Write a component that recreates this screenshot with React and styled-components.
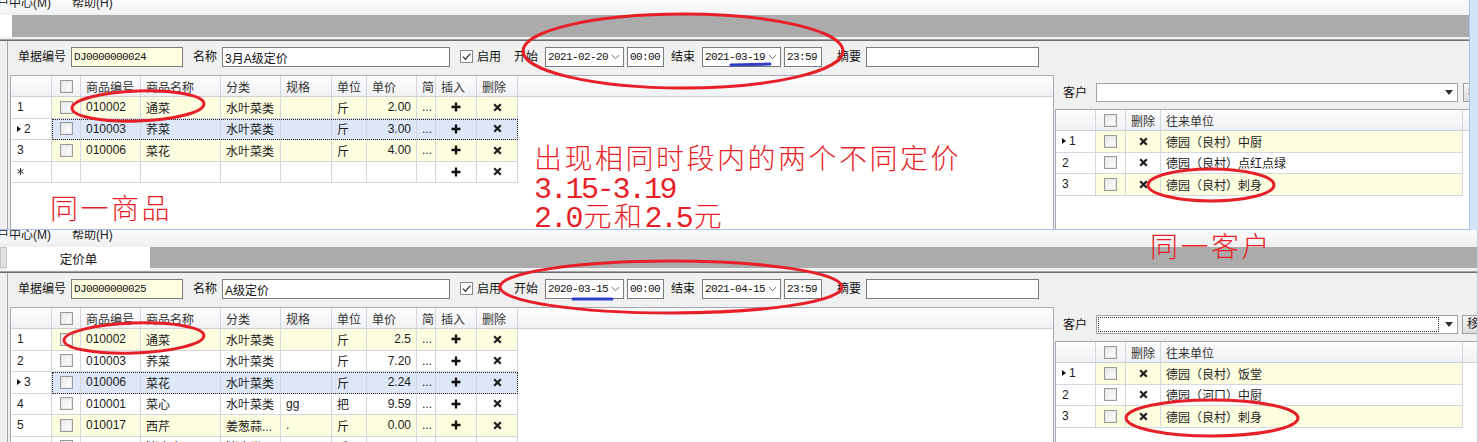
import React from 'react';
import styled, { createGlobalStyle } from 'styled-components';

const UI = `"Liberation Sans", "Noto Sans CJK SC", sans-serif`;
const MONO = `"Liberation Mono", "Noto Sans CJK SC", monospace`;
const YELLOW = '#fdfde0';
const SELECTED = '#dde7f7';
const RED = '#e61f28';

const GlobalStyle = createGlobalStyle`
  html, body { margin: 0; padding: 0; }
  body {
    width: 1478px;
    height: 442px;
    overflow: hidden;
    background: #dbe7f8;
    font-family: ${UI};
    font-size: 12px;
    color: #1b1b1b;
  }
`;

const Page = styled.div`
  position: relative;
  width: 1478px;
  height: 442px;
  overflow: hidden;
  display: flex;
  flex-direction: column;
  background: linear-gradient(90deg, #f4f7fc, #d3e3f8);
`;

const Window = styled.div`
  flex: none;
  width: ${p => p.$width}px;
  height: ${p => p.$height}px;
  box-sizing: border-box;
  display: flex;
  flex-direction: column;
  overflow: hidden;
  background: #f0f0f0;
  border-right: 1px solid ${p => p.$edge};
  border-bottom: ${p => (p.$bottom ? `1px solid ${p.$edge}` : 'none')};
`;

/* menu bar, cut at the top in both captures */
const Menubar = styled.div`
  flex: none;
  height: ${p => p.$h}px;
  box-sizing: border-box;
  padding-bottom: ${p => p.$pb}px;
  display: flex;
  align-items: flex-end;
  background: linear-gradient(#fbfbfb, #f2f3f5);
  overflow: hidden;
`;

const MenuItem = styled.span`
  flex: none;
  margin-left: ${p => p.$ml}px;
  font-size: 12px;
  line-height: 12px;
  color: #202020;
  white-space: nowrap;
`;

const TabStrip = styled.div`
  flex: none;
  height: 24px;
  margin-top: ${p => p.$mt}px;
  display: flex;
  align-items: flex-start;
  background: #f0f0f0;
`;

const TabStub = styled.div`
  flex: none;
  width: ${p => p.$w}px;
  height: ${p => p.$h}px;
  box-sizing: border-box;
  background: ${p => p.$bg};
  border: ${p => (p.$framed ? '1px solid #c4c4c4' : 'none')};
`;

const Tab = styled.div`
  flex: none;
  width: 143px;
  height: 23px;
  background: #fff;
  display: flex;
  align-items: center;
  justify-content: center;
  font-size: 12.5px;
  color: #111;
`;

const TabFill = styled.div`
  flex: 1;
  height: ${p => p.$h}px;
  background: #ababab;
`;

const Rule = styled.div`
  flex: none;
  height: 2px;
  box-sizing: border-box;
  border-top: 1px solid #a4a4a4;
  background: #6c6c6c;
`;

const Body = styled.div`
  flex: 1;
  min-height: 0;
  margin-left: 7px;
  border-left: 1px solid #a7a7a7;
  display: flex;
  flex-direction: column;
`;

const FormRow = styled.div`
  flex: none;
  height: 34px;
  box-sizing: border-box;
  padding: 6px 0 0 10px;
  display: flex;
  align-items: flex-start;
`;

const Label = styled.span`
  flex: none;
  margin-left: ${p => p.$ml || 0}px;
  line-height: 20px;
  font-size: 12px;
  color: #111;
  white-space: nowrap;
`;

const Input = styled.div`
  flex: none;
  margin-left: ${p => p.$ml || 0}px;
  width: ${p => p.$w}px;
  height: 20px;
  box-sizing: border-box;
  border: 1px solid #7c7c7c;
  background: ${p => (p.$yellow ? '#ffffe1' : '#fff')};
  padding: 0 3px 0 2px;
  display: flex;
  align-items: center;
  justify-content: space-between;
  font-family: ${p => (p.$mono ? MONO : UI)};
  font-size: ${p => (p.$mono ? '11px' : '12px')};
  letter-spacing: ${p => (p.$mono ? '-0.6px' : '0')};
  color: #111;
  white-space: nowrap;
  overflow: hidden;
`;

const FormCheck = styled.span`
  flex: none;
  margin: 3px 0 0 ${p => p.$ml}px;
  width: 13px;
  height: 13px;
  box-sizing: border-box;
  border: 1px solid #8a8a8a;
  background: #fff;
  display: flex;
  align-items: center;
  justify-content: center;
`;

const Content = styled.div`
  flex: 1;
  min-height: 0;
  display: flex;
`;

const GridFrame = styled.div`
  flex: ${p => (p.$w ? 'none' : '1')};
  width: ${p => (p.$w ? `${p.$w}px` : 'auto')};
  margin-left: ${p => p.$ml || 0}px;
  box-sizing: border-box;
  background: #fff;
  border-top: 1px solid #a6a7b0;
  border-left: 1px solid #a6a7b0;
  border-right: ${p => (p.$rb ? '1px solid #a6a7b0' : 'none')};
  overflow: hidden;
`;

const HeadRow = styled.div`
  display: flex;
  height: 21px;
  box-sizing: border-box;
  border-bottom: 1px solid #cdcfd8;
  background: linear-gradient(#fdfdfe, #f0f1f4);
  color: #333;
`;

const HeadCell = styled.div`
  flex: none;
  width: ${p => p.$w}px;
  box-sizing: border-box;
  border-right: 1px solid #d3d5dd;
  padding-left: ${p => (p.$center ? 0 : 5)}px;
  display: flex;
  align-items: center;
  justify-content: ${p => (p.$center ? 'center' : 'flex-start')};
  white-space: nowrap;
  overflow: hidden;
`;

const Row = styled.div`
  display: flex;
  height: 21.5px;
`;

const RowHead = styled.div`
  flex: none;
  width: ${p => p.$w}px;
  box-sizing: border-box;
  border-right: 1px solid #d5d6de;
  border-bottom: 1px solid #d5d6de;
  background: #fff;
  padding-left: 6px;
  display: flex;
  align-items: center;
  gap: 3px;
  color: #222;
`;

const RowBody = styled.div`
  display: flex;
  background: ${p => (p.$tone === 'odd' ? YELLOW : p.$tone === 'sel' ? SELECTED : '#fff')};
  outline: ${p => (p.$tone === 'sel' ? '1px dotted #2a2a2a' : 'none')};
  outline-offset: -1px;
`;

const Cell = styled.div`
  flex: none;
  width: ${p => p.$w}px;
  box-sizing: border-box;
  border-right: 1px solid #d5d6de;
  border-bottom: 1px solid #d5d6de;
  padding: 0 5px;
  display: flex;
  align-items: center;
  justify-content: ${p => (p.$align === 'center' ? 'center' : p.$align === 'right' ? 'flex-end' : 'flex-start')};
  white-space: nowrap;
  overflow: hidden;
  color: #1c1c1c;
`;

const Check = styled.span`
  flex: none;
  width: 13px;
  height: 13px;
  box-sizing: border-box;
  border: 1px solid #9b9b9b;
  box-shadow: inset 0 0 0 1px #e6e6e6;
  background: linear-gradient(135deg, #e9e9e9, #ffffff);
`;

const Arrow = styled.span`
  width: 0;
  height: 0;
  border-top: 3.5px solid transparent;
  border-bottom: 3.5px solid transparent;
  border-left: 4px solid #111;
`;

const RightPanel = styled.div`
  flex: 1;
  min-width: 0;
  display: flex;
  flex-direction: column;
  padding-left: 1px;
`;

const CustomerRow = styled.div`
  flex: none;
  height: 34px;
  box-sizing: border-box;
  padding: 8px 0 0 8px;
  display: flex;
  align-items: flex-start;
`;

const Combo = styled.div`
  flex: none;
  margin-left: 9px;
  width: 362px;
  height: 19px;
  box-sizing: border-box;
  border: 1px solid #a2a2a8;
  background: #fff;
  display: flex;
  align-items: center;
  justify-content: flex-end;
  padding-right: 4px;
  position: relative;
  &::before {
    content: '';
    display: ${p => (p.$focus ? 'block' : 'none')};
    position: absolute;
    left: 1px;
    top: 1px;
    right: 18px;
    bottom: 1px;
    border: 1px dotted #333;
  }
`;

const SideButton = styled.div`
  flex: none;
  margin-left: ${p => p.$ml}px;
  width: 24px;
  height: 19px;
  box-sizing: border-box;
  border: 1px solid #a0a0a0;
  background: linear-gradient(#f6f6f6, #dcdcdc);
  padding-left: 4px;
  line-height: 17px;
  font-size: 12px;
`;

const Note = styled.div`
  position: absolute;
  left: ${p => p.$x}px;
  top: ${p => p.$y}px;
  color: ${RED};
  font-family: "Noto Sans CJK SC", sans-serif;
  font-weight: 300;
  font-size: 28px;
  line-height: 29px;
  letter-spacing: 2.5px;
  white-space: nowrap;
  pointer-events: none;
`;

const Num = styled.span`
  font-family: "Liberation Mono", monospace;
  font-size: 30px;
  line-height: 10px;
  letter-spacing: -2.3px;
  margin-right: 2.3px;
`;

const Marks = styled.svg`
  position: absolute;
  left: 0;
  top: 0;
  pointer-events: none;
`;

const Plus = () => (
  <svg width="10" height="10" viewBox="0 0 10 10">
    <path d="M5 0.5v9M0.5 5h9" stroke="#111" strokeWidth="2.3" />
  </svg>
);

const Cross = () => (
  <svg width="9" height="9" viewBox="0 0 9 9">
    <path d="M1.2 1.2l6.6 6.6M7.8 1.2l-6.6 6.6" stroke="#1e1e1e" strokeWidth="2.2" />
  </svg>
);

const NewMark = () => (
  <svg width="7" height="7" viewBox="0 0 7 7">
    <path d="M3.5 0v7M0.5 1.8l6 3.4M6.5 1.8l-6 3.4" stroke="#333" strokeWidth="1" />
  </svg>
);

const Chevron = () => (
  <svg width="9" height="6" viewBox="0 0 9 6">
    <path d="M0.8 1l3.7 3.7L8.2 1" fill="none" stroke="#6b6b6b" strokeWidth="1" />
  </svg>
);

const DropArrow = () => (
  <svg width="8" height="5" viewBox="0 0 8 5">
    <path d="M0 0h8L4 5z" fill="#2f2f2f" />
  </svg>
);

const Tick = () => (
  <svg width="11" height="11" viewBox="0 0 11 11">
    <path d="M1.8 5.6l2.6 2.6L9.4 2.6" fill="none" stroke="#3a3a3a" strokeWidth="1.3" />
  </svg>
);

const GOODS_COLS = [
  { key: 'cb', w: 29, center: true },
  { key: 'code', w: 60, title: '商品编号' },
  { key: 'name', w: 80, title: '商品名称' },
  { key: 'cat', w: 60, title: '分类' },
  { key: 'spec', w: 51, title: '规格' },
  { key: 'unit', w: 35, title: '单位' },
  { key: 'price', w: 50, title: '单价', align: 'right' },
  { key: 'memo', w: 19, title: '简' },
  { key: 'ins', w: 41, title: '插入', align: 'center' },
  { key: 'del', w: 41, title: '删除', align: 'center' },
];

const PARTY_COLS = [
  { key: 'cb', w: 30, center: true },
  { key: 'del', w: 35, title: '删除', align: 'center' },
  { key: 'party', w: 302, title: '往来单位' },
];

const good = (n, tone, code, name, cat, spec, unit, price, current) => ({
  n, tone, current, code, name, cat, spec, unit, price,
});

const TOP_GOODS = [
  good('1', 'odd', '010002', '通菜', '水叶菜类', '', '斤', '2.00'),
  good('2', 'sel', '010003', '荞菜', '水叶菜类', '', '斤', '3.00', true),
  good('3', 'odd', '010006', '菜花', '水叶菜类', '', '斤', '4.00'),
  { isNew: true, tone: 'even' },
];

const BOTTOM_GOODS = [
  good('1', 'odd', '010002', '通菜', '水叶菜类', '', '斤', '2.5'),
  good('2', 'even', '010003', '荞菜', '水叶菜类', '', '斤', '7.20'),
  good('3', 'sel', '010006', '菜花', '水叶菜类', '', '斤', '2.24', true),
  good('4', 'even', '010001', '菜心', '水叶菜类', 'gg', '把', '9.59'),
  good('5', 'odd', '010017', '西芹', '姜葱蒜...', '.', '斤', '0.00'),
  good('6', 'even', '150023', '猪瘦肉', '猪肉类', '', '斤', '13.00'),
];

const TOP_PARTIES = [
  { n: '1', tone: 'odd', current: true, party: '德园（良村）中厨' },
  { n: '2', tone: 'even', party: '德园（良村）点红点绿' },
  { n: '3', tone: 'odd', party: '德园（良村）刺身' },
];

const BOTTOM_PARTIES = [
  { n: '1', tone: 'odd', current: true, party: '德园（良村）饭堂' },
  { n: '2', tone: 'even', party: '德园（河口）中厨' },
  { n: '3', tone: 'odd', party: '德园（良村）刺身' },
];

function cellContent(key, row) {
  if (key === 'cb') return row.isNew ? null : <Check />;
  if (key === 'ins') return <Plus />;
  if (key === 'del') return <Cross />;
  if (key === 'memo') return row.isNew ? null : '...';
  return row[key];
}

const Grid = ({ cols, headWidth, rows, ...frame }) => (
  <GridFrame {...frame}>
    <HeadRow>
      <HeadCell $w={headWidth} />
      {cols.map(c => (
        <HeadCell key={c.key} $w={c.w} $center={c.center}>
          {c.key === 'cb' ? <Check /> : c.title}
        </HeadCell>
      ))}
    </HeadRow>
    {rows.map((row, i) => (
      <Row key={i}>
        <RowHead $w={headWidth}>
          {row.current && <Arrow />}
          {row.isNew ? <NewMark /> : row.n}
        </RowHead>
        <RowBody $tone={row.tone}>
          {cols.map(c => (
            <Cell key={c.key} $w={c.w} $align={c.center ? 'center' : c.align}>
              {cellContent(c.key, row)}
            </Cell>
          ))}
        </RowBody>
      </Row>
    ))}
  </GridFrame>
);

const PriceForm = ({ code, name, start, end }) => (
  <FormRow>
    <Label>单据编号</Label>
    <Input $ml={5} $w={112} $yellow $mono>{code}</Input>
    <Label $ml={10}>名称</Label>
    <Input $ml={5} $w={228}>{name}</Input>
    <FormCheck $ml={10}><Tick /></FormCheck>
    <Label $ml={4}>启用</Label>
    <Label $ml={13}>开始</Label>
    <Input $ml={7} $w={79} $mono>{start}<Chevron /></Input>
    <Input $ml={3} $w={37} $mono>00:00</Input>
    <Label $ml={7}>结束</Label>
    <Input $ml={7} $w={79} $mono>{end}<Chevron /></Input>
    <Input $ml={3} $w={38} $mono>23:59</Input>
    <Label $ml={15}>摘要</Label>
    <Input $ml={5} $w={173} />
  </FormRow>
);

const PartyPanel = ({ rows, focus, buttonGap }) => (
  <RightPanel>
    <CustomerRow>
      <Label>客户</Label>
      <Combo $focus={focus}><DropArrow /></Combo>
      <SideButton $ml={buttonGap}>移</SideButton>
    </CustomerRow>
    <Grid cols={PARTY_COLS} headWidth={40} rows={rows} $ml={0} />
  </RightPanel>
);

export default function App() {
  return (
    <>
      <GlobalStyle />
      <Page>
        <Window $width={1470} $height={230} $edge="#a6c2ea" $bottom>
          <Menubar $h={14} $pb={5}>
            <MenuItem $ml={-15}>用户中心(M)</MenuItem>
            <MenuItem $ml={21}>帮助(H)</MenuItem>
          </Menubar>
          <TabStrip $mt={1}>
            <TabStub $w={12} $h={22} $bg="#ffffff" />
            <TabFill $h={22} />
          </TabStrip>
          <Rule />
          <Body>
            <PriceForm code="DJ0000000024" name="3月A级定价" start="2021-02-20" end="2021-03-19" />
            <Content>
              <Grid cols={GOODS_COLS} headWidth={41} rows={TOP_GOODS} $w={1044} $ml={2} $rb />
              <PartyPanel rows={TOP_PARTIES} buttonGap={5} />
            </Content>
          </Body>
        </Window>

        <Window $width={1478} $height={212} $edge="#c3cbd6">
          <Menubar $h={13} $pb={2}>
            <MenuItem $ml={-15}>用户中心(M)</MenuItem>
            <MenuItem $ml={21}>帮助(H)</MenuItem>
          </Menubar>
          <TabStrip $mt={4}>
            <TabStub $w={7} $h={21} $bg="#e2e2e2" $framed />
            <Tab>定价单</Tab>
            <TabFill $h={21} />
          </TabStrip>
          <Rule />
          <Body>
            <PriceForm code="DJ0000000025" name="A级定价" start="2020-03-15" end="2021-04-15" />
            <Content>
              <Grid cols={GOODS_COLS} headWidth={41} rows={BOTTOM_GOODS} $w={1044} $ml={2} $rb />
              <PartyPanel rows={BOTTOM_PARTIES} focus buttonGap={4} />
            </Content>
          </Body>
        </Window>

        <Marks width="1478" height="442" viewBox="0 0 1478 442">
          <g fill="none" stroke={RED} strokeWidth="3">
            <ellipse cx="683" cy="51" rx="160" ry="37" />
            <ellipse cx="138" cy="106" rx="66" ry="15" transform="rotate(-2 138 106)" />
            <ellipse cx="1211" cy="185" rx="63" ry="16" />
            <ellipse cx="671" cy="287" rx="171" ry="26" />
            <ellipse cx="134" cy="338" rx="70" ry="15" transform="rotate(-2 134 338)" />
            <ellipse cx="1212" cy="418" rx="86" ry="18" />
          </g>
          <g stroke="#2f3fc6" strokeWidth="3" strokeLinecap="round">
            <line x1="731" y1="65" x2="770" y2="64" />
            <line x1="573" y1="299" x2="612" y2="299" />
          </g>
        </Marks>

        <Note $x={50} $y={193}>同一商品</Note>
        <Note $x={534} $y={143}>
          出现相同时段内的两个不同定价
          <br />
          <Num>3.15-3.19</Num>
          <br />
          <Num>2.0</Num>元和<Num>2.5</Num>元
        </Note>
        <Note $x={1150} $y={231}>同一客户</Note>
      </Page>
    </>
  );
}
